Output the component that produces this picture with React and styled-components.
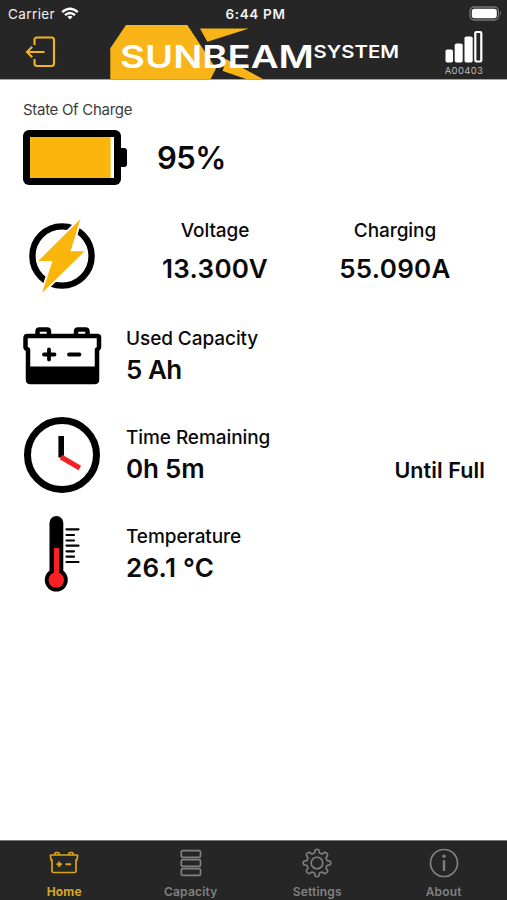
import React from "react";
import styled, { createGlobalStyle } from "styled-components";

const GlobalStyle = createGlobalStyle`
  * {
    box-sizing: border-box;
  }
  body {
    margin: 0;
    background: #fff;
    font-family: Inter, "Liberation Sans", sans-serif;
    color: #0a0a0a;
  }
  svg {
    display: block;
    flex: none;
  }
`;

const Screen = styled.div`
  display: flex;
  flex-direction: column;
  width: 507px;
  height: 900px;
  overflow: hidden;
`;

const Header = styled.header`
  height: 80px;
  background: #262626;
  border-bottom: 1px solid #a5a5a5;
`;

const StatusBar = styled.div`
  display: grid;
  grid-template-columns: 1fr auto 1fr;
  align-items: center;
  height: 25px;
  padding: 2px 5px 0 8px;
  color: #f2f2f2;
  font-size: 13.5px;
  line-height: 20px;
`;

const Carrier = styled.div`
  display: flex;
  align-items: center;
  gap: 6px;
  letter-spacing: 0.4px;
`;

const Clock = styled.div`
  font-weight: 600;
  letter-spacing: 0.65px;
  padding-left: 1px;
`;

const StatusBattery = styled.div`
  display: flex;
  justify-content: flex-end;
`;

const NavBar = styled.div`
  display: flex;
  height: 54px;
  padding: 0 23px 0 25px;
`;

const ExitButton = styled.button`
  display: flex;
  width: 85px;
  padding: 11px 0 0;
  border: 0;
  background: none;
`;

const Signal = styled.div`
  display: flex;
  flex-direction: column;
  align-items: center;
  gap: 1px;
  width: 40px;
  margin-left: auto;
  padding-top: 5px;
  color: #bdbdbd;
  font-size: 9.5px;
  line-height: 12px;
  letter-spacing: 0.35px;
`;

const Main = styled.main`
  flex: 1;
  padding: 20px 22px 0 23px;
`;

const Caption = styled.div`
  color: #3c3c3c;
  font-size: 15px;
  line-height: 20px;
  letter-spacing: -0.3px;
`;

const Row = styled.section`
  display: flex;
  height: ${props => props.$height}px;
  align-items: center;
`;

const PowerRow = styled(Row)`
  align-items: flex-start;
  padding-top: 22px;
`;

const IconCell = styled.div`
  width: ${props => props.$width || 103}px;
`;

const Label = styled.div`
  font-size: 19px;
  font-weight: 450;
  line-height: 24px;
  letter-spacing: -0.08px;
`;

const Value = styled.div`
  font-size: ${props => props.$size || 26}px;
  font-weight: 600;
  line-height: 32px;
  letter-spacing: ${props => props.$spacing || 0}px;
  white-space: nowrap;
`;

const Reading = styled.div`
  display: flex;
  flex-direction: column;
  gap: 3px;
  flex: 1;
  padding-top: 2px;
`;

const PowerReading = styled(Reading)`
  flex: 0 0 180px;
  gap: 10px;
  text-align: center;
`;

const Note = styled.div`
  align-self: flex-end;
  padding-bottom: 20px;
  font-size: 21.5px;
  font-weight: 600;
  line-height: 28px;
  letter-spacing: 0.1px;
`;

const TabBar = styled.nav`
  display: grid;
  grid-template-columns: repeat(4, 1fr);
  height: 60px;
  padding-left: 1px;
  background: #262626;
  border-top: 1px solid #777;
`;

const Tab = styled.a`
  display: flex;
  flex-direction: column;
  align-items: center;
  gap: 7px;
  padding-top: 7px;
  color: ${props => (props.$active ? "#dba51b" : "#808080")};
  font-size: 12px;
  font-weight: ${props => (props.$active ? 700 : 600)};
  line-height: 14px;
  letter-spacing: 0.2px;
`;

function WifiIcon() {
  return (
    <svg width="18" height="14" viewBox="0 0 18 14">
      <g fill="none" stroke="#fff" strokeWidth="2.4">
        <path d="M1.2 5.2Q9-1.6 16.8 5.2" />
        <path d="M4 8.2Q9 3.7 14 8.2" />
      </g>
      <path d="M9 12.5L6.4 9.8Q9 7.8 11.6 9.8Z" fill="#fff" />
    </svg>
  );
}

function StatusBatteryIcon() {
  return (
    <svg width="33" height="15" viewBox="0 0 33 15">
      <rect x="1" y="1" width="28.5" height="13" rx="4.2" fill="none" stroke="#777" strokeWidth="1.3" />
      <rect x="2.8" y="2.8" width="25" height="9.4" rx="2.6" fill="#fff" />
      <path d="M31 5.3Q33 7.5 31 9.7Z" fill="#777" />
    </svg>
  );
}

function ExitIcon() {
  return (
    <svg width="31" height="32" viewBox="0 0 31 32" fill="none" stroke="#f0b51c" strokeWidth="2.1">
      <path d="M9.5 9V4Q9.5 1.5 12 1.5H26.5Q29 1.5 29 4V27.5Q29 30 26.5 30H12Q9.5 30 9.5 27.5V23" />
      <path d="M19.5 16H2M7.2 10.8L2 16L7.2 21.2" />
    </svg>
  );
}

function Logo() {
  return (
    <svg width="290" height="54" viewBox="110 25 290 54">
      <g fill="#f9b417">
        <path d="M110.3 48.3L126 25H187.3L216 68.5L210.7 79H110.3Z" />
        <path d="M200 28.5H249L207.3 41.7Z" />
        <path d="M226 59L263 79H246L222.7 71Z" />
      </g>
      <g fill="#fff" fontFamily="Inter, sans-serif" fontWeight="600">
        <text x="120" y="68" fontSize="31" textLength="194" lengthAdjust="spacingAndGlyphs">
          SUNBEAM
        </text>
        <text x="313.5" y="57.5" fontSize="17" textLength="85.5" lengthAdjust="spacingAndGlyphs">
          SYSTEM
        </text>
      </g>
    </svg>
  );
}

function SignalIcon() {
  return (
    <svg width="38" height="34" viewBox="0 0 38 34" fill="#fff">
      <rect x="0.5" y="19.5" width="7.5" height="13" rx="1.8" />
      <rect x="9.7" y="13.5" width="8" height="19" rx="1.8" />
      <rect x="19.5" y="6.5" width="8.2" height="26" rx="1.8" />
      <rect x="30.3" y="2" width="6" height="29.5" rx="1.2" fill="none" stroke="#fff" strokeWidth="2.2" />
    </svg>
  );
}

function ChargeIcon({ level }) {
  return (
    <svg width="105" height="56" viewBox="0 0 105 56">
      <rect width="98" height="55" rx="6" />
      <path d="M97 18H101Q104 18 104 21V34Q104 37 101 37H97Z" />
      <rect x="7" y="7" width="84" height="41" fill="#fff" />
      <rect x="7" y="7" width={(84 * level) / 100} height="41" fill="#fbb60d" />
    </svg>
  );
}

function BoltIcon() {
  return (
    <svg width="80" height="78" viewBox="0 0 80 78">
      <circle cx="39" cy="39" r="29.6" fill="none" stroke="#000" strokeWidth="6.4" />
      <path
        d="M57.5 2L15.2 44H29.5L19 76L61.5 34.3H47.5Z"
        fill="#fbb60d"
        stroke="#fff"
        strokeWidth="3.6"
        strokeLinejoin="round"
        paintOrder="stroke"
      />
    </svg>
  );
}

function CarBatteryIcon() {
  return (
    <svg width="79" height="58" viewBox="0 0 79 58">
      <g fill="none" stroke="#000" strokeWidth="4.5" strokeLinejoin="round">
        <path d="M14.5 9V4.5Q14.5 2.5 16.5 2.5H24Q26 2.5 26 4.5V9M53 9V4.5Q53 2.5 55 2.5H62.5Q64.5 2.5 64.5 4.5V9" />
        <path d="M4.5 9H74.5Q76 9 76 10.5V20Q76 21.5 74 22.5V52.5Q74 55 71.5 55H7.5Q5 55 5 52.5V22.5Q2.5 21.5 2.5 20V11Q2.5 9 4.5 9Z" />
      </g>
      <path d="M5 39.5H74V53Q74 55 71 55H8Q5 55 5 53Z" />
      <path
        d="M21 27.5H31.5M26 22.5V32.5M46 27.5H56.5"
        stroke="#000"
        strokeWidth="3.8"
        strokeLinecap="round"
      />
    </svg>
  );
}

function TimeIcon() {
  return (
    <svg width="78" height="78" viewBox="0 0 78 78" fill="none">
      <circle cx="39" cy="39" r="34.5" stroke="#000" strokeWidth="7" />
      <path d="M38.2 20V41.5" stroke="#000" strokeWidth="5.6" />
      <path d="M38 41L56.8 52" stroke="#f51e22" strokeWidth="5" />
    </svg>
  );
}

function ThermometerIcon() {
  return (
    <svg width="70" height="78" viewBox="0 0 70 78">
      <rect x="26.5" y="1" width="13.8" height="66" rx="6.9" />
      <circle cx="33.3" cy="65" r="11.5" />
      <rect x="31" y="33" width="5" height="30" fill="#fa2023" />
      <circle cx="33.3" cy="65" r="7.8" fill="#fa2023" />
      <path
        d="M43.5 14.3H55.5M43.5 20H51M43.5 25.5H51M43.5 30.7H55.5M43.5 36.3H51M43.5 41.7H51M43.5 47H55.5"
        stroke="#000"
        strokeWidth="2.2"
        strokeLinecap="round"
      />
    </svg>
  );
}

function HomeIcon() {
  return (
    <svg width="30" height="30" viewBox="0 0 30 30" fill="none" stroke="currentColor" strokeWidth="1.7">
      <path d="M6 7V5.5Q6 4.5 7 4.5H9Q10 4.5 10 5.5V7M20 7V5.5Q20 4.5 21 4.5H23Q24 4.5 24 5.5V7" />
      <path d="M2 7H28Q28.7 7 28.5 8L28 12H27V23Q27 24.5 25.5 24.5H4.5Q3 24.5 3 23V12H2L1.5 8Q1.3 7 2 7Z" />
      <path d="M7.5 16.3H13M10.2 13.5V19M16.5 16.3H22" strokeWidth="2" />
    </svg>
  );
}

function CapacityIcon() {
  return (
    <svg width="30" height="30" viewBox="0 0 30 30" fill="none" stroke="currentColor" strokeWidth="1.7">
      <rect x="5.3" y="2.6" width="19.2" height="6.8" rx="1.5" />
      <rect x="5.3" y="11.6" width="19.2" height="6.8" rx="1.5" />
      <rect x="5.3" y="20.6" width="19.2" height="6.8" rx="1.5" />
    </svg>
  );
}

function SettingsIcon() {
  return (
    <svg width="30" height="30" viewBox="0 0 30 30" fill="none" stroke="currentColor" strokeWidth="1.6">
      <g strokeLinejoin="round">
        {/* eight rounded teeth around the hub */}
        <path d="M13.3 1.8Q15 0.6 16.7 1.8L17.5 5Q18.8 5.4 20 6L22.9 4.3Q25.3 4.7 25.7 7.1L24 10Q24.6 11.2 25 12.5L28.2 13.3Q29.4 15 28.2 16.7L25 17.5Q24.6 18.8 24 20L25.7 22.9Q25.3 25.3 22.9 25.7L20 24Q18.8 24.6 17.5 25L16.7 28.2Q15 29.4 13.3 28.2L12.5 25Q11.2 24.6 10 24L7.1 25.7Q4.7 25.3 4.3 22.9L6 20Q5.4 18.8 5 17.5L1.8 16.7Q0.6 15 1.8 13.3L5 12.5Q5.4 11.2 6 10L4.3 7.1Q4.7 4.7 7.1 4.3L10 6Q11.2 5.4 12.5 5Z" />
      </g>
      <circle cx="15" cy="15" r="5.8" />
    </svg>
  );
}

function AboutIcon() {
  return (
    <svg width="30" height="30" viewBox="0 0 30 30" fill="none" stroke="currentColor">
      <circle cx="15" cy="15" r="13.5" strokeWidth="1.7" />
      <path d="M15 12.2V23" strokeWidth="2.4" />
      <circle cx="15" cy="8.3" r="1.7" fill="currentColor" stroke="none" />
    </svg>
  );
}

const tabs = [
  { name: "Home", Icon: HomeIcon, active: true },
  { name: "Capacity", Icon: CapacityIcon },
  { name: "Settings", Icon: SettingsIcon },
  { name: "About", Icon: AboutIcon }
];

const details = [
  {
    label: "Used Capacity",
    value: "5 Ah",
    spacing: -0.5,
    Icon: CarBatteryIcon
  },
  {
    label: "Time Remaining",
    value: "0h 5m",
    spacing: -0.2,
    note: "Until Full",
    Icon: TimeIcon
  },
  {
    label: "Temperature",
    value: "26.1 °C",
    spacing: 0.3,
    Icon: ThermometerIcon
  }
];

function App() {
  return (
    <Screen>
      <GlobalStyle />
      <Header>
        <StatusBar>
          <Carrier>
            Carrier
            <WifiIcon />
          </Carrier>
          <Clock>6:44 PM</Clock>
          <StatusBattery>
            <StatusBatteryIcon />
          </StatusBattery>
        </StatusBar>
        <NavBar>
          <ExitButton>
            <ExitIcon />
          </ExitButton>
          <Logo />
          <Signal>
            <SignalIcon />
            A00403
          </Signal>
        </NavBar>
      </Header>
      <Main>
        <Caption>State Of Charge</Caption>
        <Row $height={75}>
          <IconCell $width={134}>
            <ChargeIcon level={96} />
          </IconCell>
          <Value $size={31} $spacing={-0.6}>
            95%
          </Value>
        </Row>
        <PowerRow $height={111}>
          <IconCell>
            <BoltIcon />
          </IconCell>
          <PowerReading>
            <Label>Voltage</Label>
            <Value $spacing={0.3}>13.300V</Value>
          </PowerReading>
          <PowerReading>
            <Label>Charging</Label>
            <Value $spacing={0.3}>55.090A</Value>
          </PowerReading>
        </PowerRow>
        {details.map(({ label, value, spacing, note, Icon }) => (
          <Row key={label} $height={99}>
            <IconCell>
              <Icon />
            </IconCell>
            <Reading>
              <Label>{label}</Label>
              <Value $spacing={spacing}>{value}</Value>
            </Reading>
            {note && <Note>{note}</Note>}
          </Row>
        ))}
      </Main>
      <TabBar>
        {tabs.map(({ name, Icon, active }) => (
          <Tab key={name} $active={active}>
            <Icon />
            {name}
          </Tab>
        ))}
      </TabBar>
    </Screen>
  );
}

export default App;
